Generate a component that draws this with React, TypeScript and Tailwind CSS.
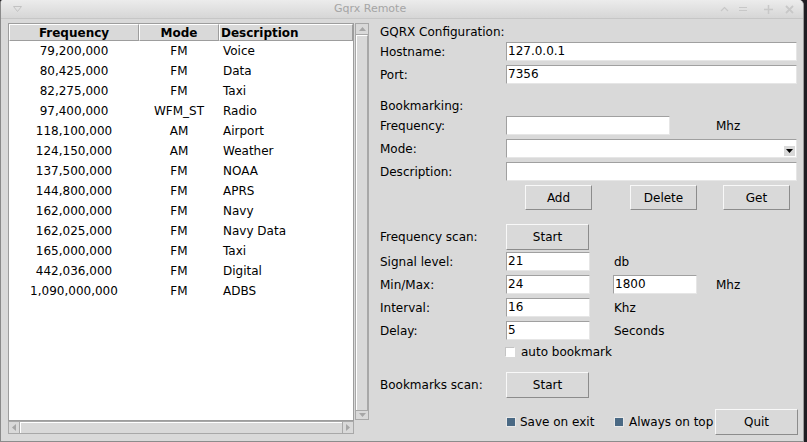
import React from "react";

const rows: [string, string, string][] = [
  ["79,200,000", "FM", "Voice"],
  ["80,425,000", "FM", "Data"],
  ["82,275,000", "FM", "Taxi"],
  ["97,400,000", "WFM_ST", "Radio"],
  ["118,100,000", "AM", "Airport"],
  ["124,150,000", "AM", "Weather"],
  ["137,500,000", "FM", "NOAA"],
  ["144,800,000", "FM", "APRS"],
  ["162,000,000", "FM", "Navy"],
  ["162,025,000", "FM", "Navy Data"],
  ["165,000,000", "FM", "Taxi"],
  ["442,036,000", "FM", "Digital"],
  ["1,090,000,000", "FM", "ADBS"],
];

function Entry({ value = "", className = "" }: { value?: string; className?: string }) {
  return (
    <div
      className={`h-[19px] bg-white border border-t-[#a0a0a0] border-l-[#a0a0a0] border-r-[#e6e6e6] border-b-[#e6e6e6] pl-[1px] leading-[17px] ${className}`}
    >
      {value}
    </div>
  );
}

function Btn({ label, className = "" }: { label: string; className?: string }) {
  return (
    <button
      className={`h-[26px] w-[83px] flex items-center justify-center bg-[#d9d9d9] border border-t-[#f8f8f8] border-l-[#f8f8f8] border-r-[#8c8c8c] border-b-[#8c8c8c] ${className}`}
    >
      {label}
    </button>
  );
}

function Row({ label, children }: { label: string; children?: React.ReactNode }) {
  return (
    <div className="h-[23px] flex items-center">
      <div className="w-[126px] shrink-0">{label}</div>
      {children}
    </div>
  );
}

function Check({ checked, label, className = "" }: { checked?: boolean; label: string; className?: string }) {
  return (
    <div className={`flex items-center ${className}`}>
      {checked ? (
        <div className="w-[10px] h-[10px] bg-[#4a6984] border border-[#e8e8e8] shrink-0" />
      ) : (
        <div className="w-[10px] h-[10px] bg-white border border-t-[#c4c4c4] border-l-[#c4c4c4] border-r-white border-b-white shrink-0" />
      )}
      <span className="ml-[5px]">{label}</span>
    </div>
  );
}

function Arrow({ dir }: { dir: "up" | "down" | "left" | "right" }) {
  const pts = {
    up: "0,5 3.5,1 7,5",
    down: "0,1 3.5,5 7,1",
    left: "5,0 1,3.5 5,7",
    right: "1,0 5,3.5 1,7",
  }[dir];
  const vert = dir === "up" || dir === "down";
  return (
    <svg width={vert ? 7 : 6} height={vert ? 6 : 7} viewBox={vert ? "0 0 7 6" : "0 0 6 7"}>
      <polygon points={pts} fill="#a6a6a6" />
    </svg>
  );
}

export default function App() {
  return (
    <div className="w-[807px] h-[442px] flex bg-[#1f1d22] font-['DejaVu_Sans',sans-serif] text-[12px] text-black overflow-hidden">
      <div className="w-[804px] h-[442px] flex flex-col bg-[#d9d9d9] border-l border-r border-b border-l-[#8a8a8a] border-r-[#9a9a9a] border-b-[#8c8c8c] rounded-tr-[5px] rounded-tl-[3px] overflow-hidden">
        {/* title bar */}
        <div className="h-[19px] shrink-0 flex items-center bg-gradient-to-b from-[#ececec] to-[#d6d6d6] border-b border-[#c6c6c6]">
          <svg className="ml-[12px]" width="9" height="6" viewBox="0 0 9 6">
            <polygon points="0.5,0.5 8.5,0.5 4.5,5.5" fill="none" stroke="#c2c2c2" />
          </svg>
          <span className="ml-[312px] text-[11px] text-[#a5a5a5]">Gqrx Remote</span>
          <div className="ml-auto mr-[9px] flex items-center">
            <svg width="9" height="6" viewBox="0 0 9 6">
              <polyline points="1,5 4.5,1.5 8,5" fill="none" stroke="#c8c8c8" strokeWidth="1.2" />
            </svg>
            <svg className="ml-[10px]" width="8" height="6" viewBox="0 0 8 6">
              <line x1="0" y1="1.5" x2="8" y2="1.5" stroke="#c8c8c8" />
              <line x1="0" y1="4.5" x2="8" y2="4.5" stroke="#c8c8c8" />
            </svg>
            <svg className="ml-[17px]" width="9" height="9" viewBox="0 0 9 9">
              <line x1="4.5" y1="0" x2="4.5" y2="9" stroke="#c8c8c8" strokeWidth="1.5" />
              <line x1="0" y1="4.5" x2="9" y2="4.5" stroke="#c8c8c8" strokeWidth="1.5" />
            </svg>
            <svg className="ml-[12px]" width="9" height="9" viewBox="0 0 9 9">
              <line x1="1" y1="1" x2="8" y2="8" stroke="#c8c8c8" strokeWidth="1.8" />
              <line x1="8" y1="1" x2="1" y2="8" stroke="#c8c8c8" strokeWidth="1.8" />
            </svg>
          </div>
        </div>

        <div className="flex items-start">
          {/* bookmarks list */}
          <div className="pl-[7px] pt-[4px] flex flex-col">
            <div className="flex">
              <div className="w-[346px] h-[398px] bg-white border border-[#9d9d9d] flex flex-col">
                <div className="h-[17px] flex font-bold bg-[#d9d9d9]">
                  <div className="w-[130px] flex items-center justify-center border-t border-l border-white border-r border-r-[#9d9d9d] border-b border-b-[#9d9d9d]">
                    Frequency
                  </div>
                  <div className="w-[80px] flex items-center justify-center border-t border-l border-white border-r border-r-[#9d9d9d] border-b border-b-[#9d9d9d]">
                    Mode
                  </div>
                  <div className="w-[134px] flex items-center pl-[1px] border-t border-l border-white border-r border-r-[#9d9d9d] border-b border-b-[#9d9d9d]">
                    Description
                  </div>
                </div>
                {rows.map(([f, m, d]) => (
                  <div key={f + d} className="h-[20px] flex items-center">
                    <div className="w-[130px] text-center">{f}</div>
                    <div className="w-[80px] text-center">{m}</div>
                    <div className="pl-[4px]">{d}</div>
                  </div>
                ))}
              </div>
              {/* vertical scrollbar */}
              <div className="w-[14px] h-[397px] ml-[1px] flex flex-col border border-[#a8a8a8] bg-[#d9d9d9]">
                <div className="h-[11px] flex items-center justify-center border-b border-[#a8a8a8]">
                  <Arrow dir="up" />
                </div>
                <div className="flex-1 border-l border-t border-white border-r border-r-[#a8a8a8]" />
                <div className="h-[9px] flex items-center justify-center border-t border-[#a8a8a8]">
                  <Arrow dir="down" />
                </div>
              </div>
            </div>
            {/* horizontal scrollbar */}
            <div className="w-[346px] h-[13px] flex border border-[#a8a8a8] bg-[#d9d9d9]">
              <div className="w-[11px] flex items-center justify-center border-r border-[#a8a8a8]">
                <Arrow dir="left" />
              </div>
              <div className="flex-1 border-l border-t border-white" />
              <div className="w-[11px] flex items-center justify-center border-l border-[#a8a8a8]">
                <Arrow dir="right" />
              </div>
            </div>
          </div>

          {/* controls */}
          <div className="ml-[11px] pt-[4px] flex flex-col w-[418px]">
            <div className="h-[17px] flex items-center">GQRX Configuration:</div>
            <Row label="Hostname:">
              <Entry value="127.0.0.1" className="w-[291px]" />
            </Row>
            <Row label="Port:">
              <Entry value="7356" className="w-[291px]" />
            </Row>

            <div className="mt-[11px] h-[17px] flex items-center">Bookmarking:</div>
            <Row label="Frequency:">
              <Entry className="w-[164px]" />
              <span className="ml-[46px]">Mhz</span>
            </Row>
            <Row label="Mode:">
              <div className="relative w-[291px] h-[19px] bg-white border border-t-[#a0a0a0] border-l-[#a0a0a0] border-r-[#e6e6e6] border-b-[#e6e6e6]">
                <div className="absolute right-[1px] bottom-[1px] w-[11px] h-[10px] bg-[#d9d9d9] flex items-center justify-center">
                  <svg width="7" height="4" viewBox="0 0 7 4">
                    <polygon points="0,0 7,0 3.5,4" fill="#000" />
                  </svg>
                </div>
              </div>
            </Row>
            <Row label="Description:">
              <Entry className="w-[291px]" />
            </Row>
            <div className="mt-[2px] flex">
              <Btn label="Add" className="ml-[145px] !w-[67px] !h-[25px]" />
              <Btn label="Delete" className="ml-[38px] !w-[67px] !h-[25px]" />
              <Btn label="Get" className="ml-[26px] !w-[67px] !h-[25px]" />
            </div>

            <div className="mt-[13px] h-[27px] flex items-center">
              <div className="w-[126px] shrink-0">Frequency scan:</div>
              <Btn label="Start" />
            </div>
            <Row label="Signal level:">
              <Entry value="21" className="w-[84px]" />
              <span className="ml-[24px]">db</span>
            </Row>
            <Row label="Min/Max:">
              <Entry value="24" className="w-[84px]" />
              <Entry value="1800" className="ml-[23px] w-[84px]" />
              <span className="ml-[19px]">Mhz</span>
            </Row>
            <Row label="Interval:">
              <Entry value="16" className="w-[84px]" />
              <span className="ml-[24px]">Khz</span>
            </Row>
            <Row label="Delay:">
              <Entry value="5" className="w-[84px]" />
              <span className="ml-[24px]">Seconds</span>
            </Row>
            <div className="h-[20px] flex items-center pl-[125px]">
              <Check label="auto bookmark" className="[&>span]:ml-[6px]" />
            </div>

            <div className="mt-[9px] h-[28px] flex items-center">
              <div className="w-[126px] shrink-0">Bookmarks scan:</div>
              <Btn label="Start" />
            </div>
            <div className="mt-[9px] h-[28px] flex items-center pl-[126px]">
              <Check checked label="Save on exit" className="w-[108px] [&>span]:ml-[4px]" />
              <Check checked label="Always on top" className="w-[101px]" />
              <Btn label="Quit" />
            </div>
          </div>
        </div>
      </div>
    </div>
  );
}
